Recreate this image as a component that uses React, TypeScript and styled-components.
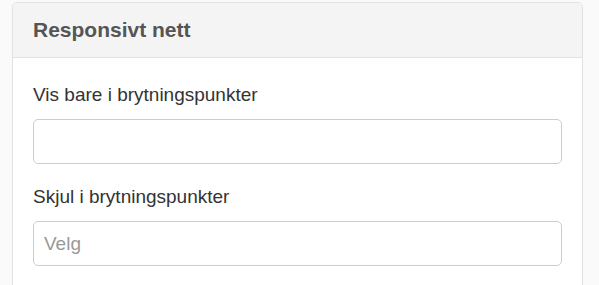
import React from "react";
import styled, { createGlobalStyle } from "styled-components";

const GlobalStyle = createGlobalStyle`
  html, body {
    margin: 0;
    padding: 0;
    background: #fafafa;
    font-family: "Liberation Sans", Arial, Helvetica, sans-serif;
  }
`;

const Page = styled.div`
  padding: 2px 16px 0 12px;
`;

const Panel = styled.section`
  background: #ffffff;
  border: 1px solid #e2e2e2;
  border-radius: 5px;
  overflow: hidden;
`;

const PanelHeader = styled.header`
  height: 54px;
  display: flex;
  align-items: center;
  padding: 0 20px;
  background: #f4f4f4;
  border-bottom: 1px solid #e2e2e2;
`;

const Title = styled.h3`
  margin: 0;
  font-size: 21px;
  line-height: 24px;
  font-weight: bold;
  color: #555555;
`;

const PanelBody = styled.div`
  padding: 25px 20px 30px;
  display: flex;
  flex-direction: column;
  gap: 21px;
`;

const Field = styled.div`
  display: flex;
  flex-direction: column;
  gap: 12px;
`;

const Label = styled.label`
  font-size: 19px;
  line-height: 24px;
  color: #333333;
`;

const Input = styled.input`
  box-sizing: border-box;
  width: 100%;
  height: 45px;
  padding: 0 10px;
  border: 1px solid #cccccc;
  border-radius: 5px;
  background: #ffffff;
  font-family: inherit;
  font-size: 19px;
  color: #333333;
  outline: none;

  &::placeholder {
    color: #999999;
  }
`;

function App() {
  return (
    <>
      <GlobalStyle />
      <Page>
        <Panel>
          <PanelHeader>
            <Title>Responsivt nett</Title>
          </PanelHeader>
          <PanelBody>
            <Field>
              <Label>Vis bare i brytningspunkter</Label>
              <Input />
            </Field>
            <Field>
              <Label>Skjul i brytningspunkter</Label>
              <Input placeholder="Velg" />
            </Field>
          </PanelBody>
        </Panel>
      </Page>
    </>
  );
}

export default App;
